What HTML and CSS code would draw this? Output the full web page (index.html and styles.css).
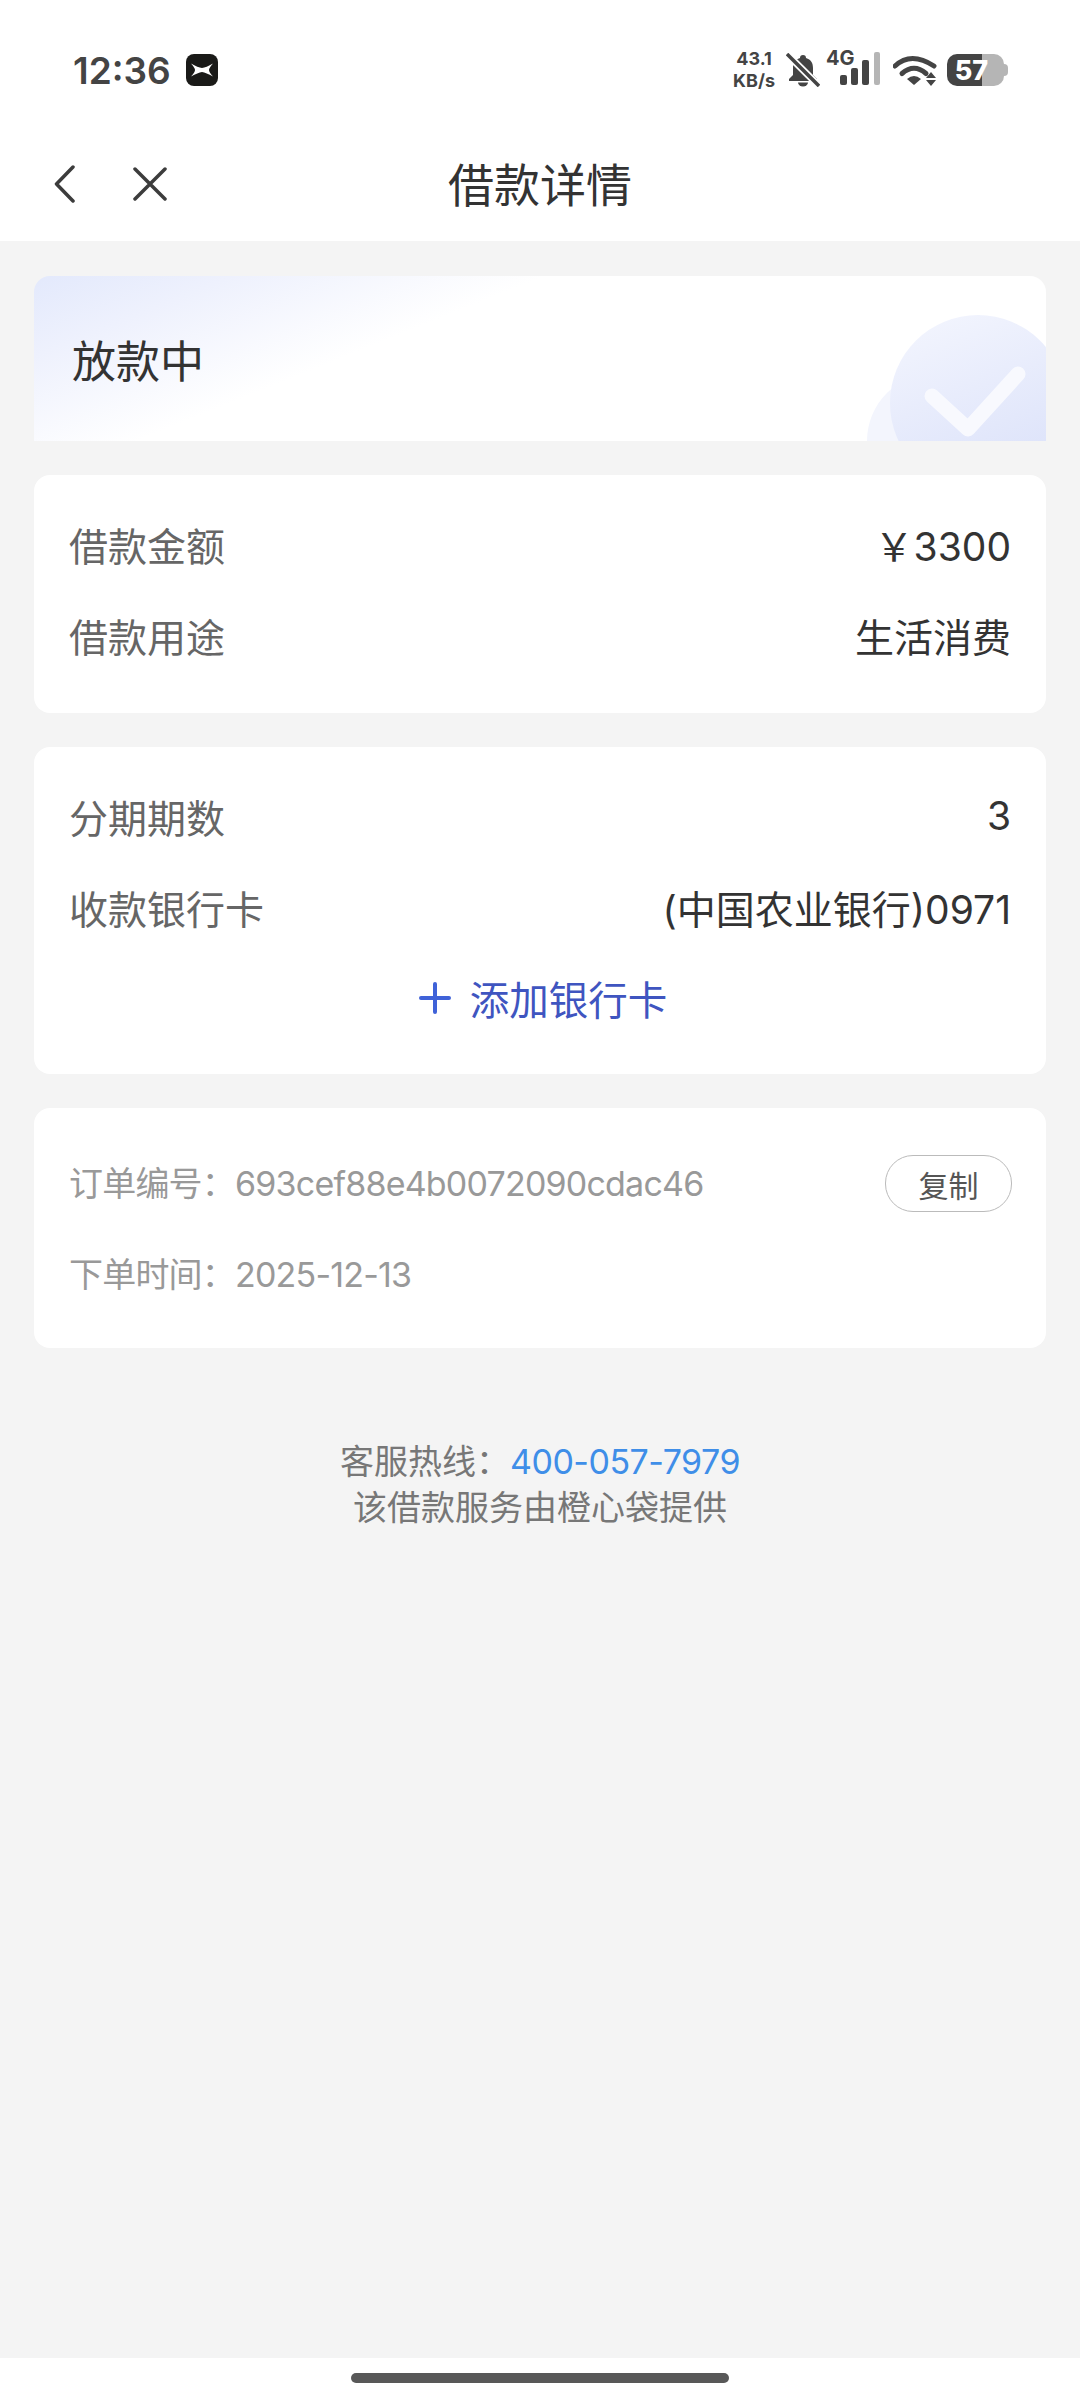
FILE: index.html
```html
<!DOCTYPE html>
<html lang="zh-CN">
<head>
    <meta charset="UTF-8">
    <meta name="viewport" content="width=device-width, initial-scale=1.0">
    <title>借款详情</title>
    <link rel="stylesheet" href="styles.css">
</head>
<body>

<div class="page">
    <div class="status-bar">
        <div class="status-left">
            <span class="clock">12:36</span>
            <svg class="app-icon" width="32" height="32" viewBox="0 0 32 32">
                <rect width="32" height="32" rx="8" fill="#1a1a18"/>
                <path d="M5 9.5 Q12 13.5 16 14 Q20 13.5 27 9.5 Q23 14 23 16 Q23 18 27 22.5 Q20 18.5 16 18 Q12 18.5 5 22.5 Q9 18 9 16 Q9 14 5 9.5Z" fill="#fff"/>
            </svg>
        </div>
        <div class="status-right">
            <div class="net-speed"><span>43.1</span><span>KB/s</span></div>
            <svg class="bell" width="34" height="34" viewBox="0 0 34 34">
                <path d="M17 2a3 3 0 0 1 3 3c5 1.500 7 5 7 10v7l4 4v2H3v-2l4-4v-7c0-5 2-8.500 7-10a3 3 0 0 1 3-3z" fill="#444"/>
                <path d="M12 29.500h10a5 4 0 0 1-10 0z" fill="#444"/>
                <path d="M1 1 33 33" stroke="#fff" stroke-width="7"/>
                <path d="M1 1 33 33" stroke="#444" stroke-width="3.500"/>
            </svg>
            <div class="signal">
                <span class="signal-type">4G</span>
                <svg width="42" height="34" viewBox="0 0 42 34">
                    <rect x="0" y="23" width="7" height="10" rx="2" fill="#444"/>
                    <rect x="11" y="16" width="7" height="17" rx="2" fill="#444"/>
                    <rect x="22" y="8" width="7" height="25" rx="2" fill="#444"/>
                    <rect x="34" y="0" width="6" height="33" rx="2" fill="#b5b5b5"/>
                </svg>
            </div>
            <svg class="wifi" width="44" height="32" viewBox="0 0 44 32">
                <path d="M2 12Q18-3 41 12" fill="none" stroke="#444" stroke-width="5" stroke-linecap="round"/>
                <path d="M9 19.500Q21 9 33 19.500" fill="none" stroke="#444" stroke-width="5" stroke-linecap="round"/>
                <path d="M14 25Q21 19 28 25L21 31Z" fill="#444"/>
                <path d="M38 18l-5 6h10zM38 32l-5-6h10z" fill="#444"/>
            </svg>
            <div class="battery">
                <div class="battery-body"><span>57</span></div>
                <div class="battery-nub"></div>
            </div>
        </div>
    </div>

    <header class="top-nav">
        <div class="nav-icons">
            <svg width="22" height="38" viewBox="0 0 22 38">
                <path d="M19 2 2.500 19 19 36" fill="none" stroke="#3c3c3c" stroke-width="3.500" stroke-linecap="round" stroke-linejoin="round"/>
            </svg>
            <svg width="34" height="34" viewBox="0 0 34 34">
                <path d="M2 2 32 32M32 2 2 32" fill="none" stroke="#3c3c3c" stroke-width="3.500" stroke-linecap="round"/>
            </svg>
        </div>
        <h1>借款详情</h1>
    </header>

    <main class="content">
        <section class="card status-card">
            <span>放款中</span>
            <svg class="status-mark" width="179" height="126" viewBox="0 0 179 126">
                <defs>
                    <linearGradient id="markFill" x1="0" y1="0" x2="0.4" y2="1">
                        <stop offset="0" stop-color="#f4f6fe"/>
                        <stop offset="1" stop-color="#dde3fa"/>
                    </linearGradient>
                </defs>
                <circle cx="68" cy="126" r="68" fill="#f3f5fd"/>
                <circle cx="111" cy="88" r="88" fill="url(#markFill)"/>
                <path d="M65 81 101 114 151 59" fill="none" stroke="#f8f9fe" stroke-width="15" stroke-linecap="round" stroke-linejoin="round"/>
            </svg>
        </section>

        <section class="card detail-card">
            <div class="row"><span class="label">借款金额</span><span class="value">￥3300</span></div>
            <div class="row"><span class="label">借款用途</span><span class="value">生活消费</span></div>
        </section>

        <section class="card detail-card bank-card">
            <div class="row"><span class="label">分期期数</span><span class="value">3</span></div>
            <div class="row"><span class="label">收款银行卡</span><span class="value">(中国农业银行)0971</span></div>
            <div class="add-card">
                <svg width="32" height="32" viewBox="0 0 32 32">
                    <path d="M16 2V30M2 16H30" stroke="#3f62d8" stroke-width="4" stroke-linecap="round"/>
                </svg>
                <span>添加银行卡</span>
            </div>
        </section>

        <section class="card order-card">
            <div class="order-row">
                <span class="order-text">订单编号：693cef88e4b0072090cdac46</span>
                <button type="button" class="copy-btn">复制</button>
            </div>
            <div class="order-row">
                <span class="order-text">下单时间：2025-12-13</span>
            </div>
        </section>

        <div class="service">
            <p>客服热线：<a href="#">400-057-7979</a></p>
            <p>该借款服务由橙心袋提供</p>
        </div>
    </main>

    <div class="home-bar"><div class="home-pill"></div></div>
</div>

</body>
</html>
```

FILE: styles.css
```css
* {
    box-sizing: border-box;
}
body {
    margin: 0;
    font-family: Inter, "Noto Sans CJK SC", sans-serif;
}
.page {
    width: 1080px;
    height: 2400px;
    display: flex;
    flex-direction: column;
    background-color: #f4f4f4;
    overflow: hidden;
}

/* status bar */
.status-bar {
    height: 110px;
    padding: 30px 72px 0 73px;
    display: flex;
    justify-content: space-between;
    align-items: center;
    background-color: #fff;
}
.status-left {
    display: flex;
    align-items: center;
    gap: 15px;
}
.clock {
    font-size: 37px;
    font-weight: 600;
    color: #444;
}
.status-right {
    display: flex;
    align-items: center;
}
.net-speed {
    display: flex;
    flex-direction: column;
    align-items: center;
    font-size: 18px;
    line-height: 22px;
    font-weight: 700;
    color: #444;
}
.bell {
    margin-left: 11px;
}
.signal {
    margin-left: 6px;
    width: 56px;
    height: 36px;
    position: relative;
    display: flex;
    justify-content: flex-end;
}
.signal-type {
    position: absolute;
    left: 0;
    top: -6px;
    font-size: 20px;
    line-height: 24px;
    font-weight: 700;
    color: #444;
}
.wifi {
    margin-left: 11px;
}
.battery {
    margin-left: 10px;
    display: flex;
    align-items: center;
}
.battery-body {
    width: 57px;
    height: 32px;
    border-radius: 10px;
    background: linear-gradient(90deg, #444 0, #444 61%, #b5b5b5 61%);
    display: flex;
    align-items: center;
    justify-content: center;
    padding-right: 8px;
    font-size: 27px;
    font-weight: 800;
    color: #fff;
}
.battery-nub {
    width: 4px;
    height: 12px;
    border-radius: 0 4px 4px 0;
    background-color: #b5b5b5;
}

/* title bar */
.top-nav {
    height: 131px;
    position: relative;
    padding-top: 12px;
    display: flex;
    align-items: center;
    justify-content: center;
    background-color: #fff;
}
.nav-icons {
    position: absolute;
    left: 54px;
    top: 55px;
    display: flex;
    align-items: center;
    gap: 57px;
}
.top-nav h1 {
    margin: 0;
    font-size: 46px;
    font-weight: 400;
    color: #333;
}

/* cards */
.content {
    flex: 1;
    padding: 35px 34px 0;
    display: flex;
    flex-direction: column;
    gap: 34px;
}
.card {
    background-color: #fff;
    border-radius: 16px;
}
.status-card {
    height: 165px;
    padding-left: 38px;
    position: relative;
    display: flex;
    align-items: center;
    border-radius: 16px 16px 0 0;
    overflow: hidden;
    background: linear-gradient(158deg, #e3e9fc 0, #eef1fd 14%, #fff 36%);
    font-size: 44px;
    color: #333;
}
.status-mark {
    position: absolute;
    right: 0;
    bottom: 0;
}
.detail-card {
    padding: 23px 35px 33px;
}
.bank-card {
    padding-bottom: 31px;
}
.row {
    height: 91px;
    display: flex;
    justify-content: space-between;
    align-items: center;
}
.label {
    font-size: 39px;
    color: #666;
}
.value {
    font-size: 39px;
    color: #333;
}
.add-card {
    height: 91px;
    padding-left: 6px;
    display: flex;
    justify-content: center;
    align-items: center;
    gap: 19px;
    font-size: 39.500px;
    color: #3f55c0;
}
.order-card {
    height: 240px;
    padding: 28px 34px 0 35px;
    font-size: 34px;
    color: #999;
}
.order-row {
    height: 91px;
    display: flex;
    justify-content: space-between;
    align-items: center;
}
.order-text {
    letter-spacing: -0.8px;
}
.copy-btn {
    width: 127px;
    height: 57px;
    margin-top: 4px;
    padding: 0;
    border: 1px solid #bbb;
    border-radius: 28px;
    background-color: #fff;
    font-family: inherit;
    font-size: 30px;
    color: #555;
}

/* hotline */
.service {
    margin-top: 57px;
    text-align: center;
    font-size: 34px;
    line-height: 46px;
    color: #777;
}
.service p {
    margin: 0;
}
.service a {
    letter-spacing: -0.5px;
    color: #3f8ee8;
    text-decoration: none;
}

/* gesture bar */
.home-bar {
    height: 42px;
    padding-top: 15px;
    background-color: #fff;
}
.home-pill {
    width: 378px;
    height: 10px;
    margin: auto;
    border-radius: 5px;
    background-color: #585858;
}
```
